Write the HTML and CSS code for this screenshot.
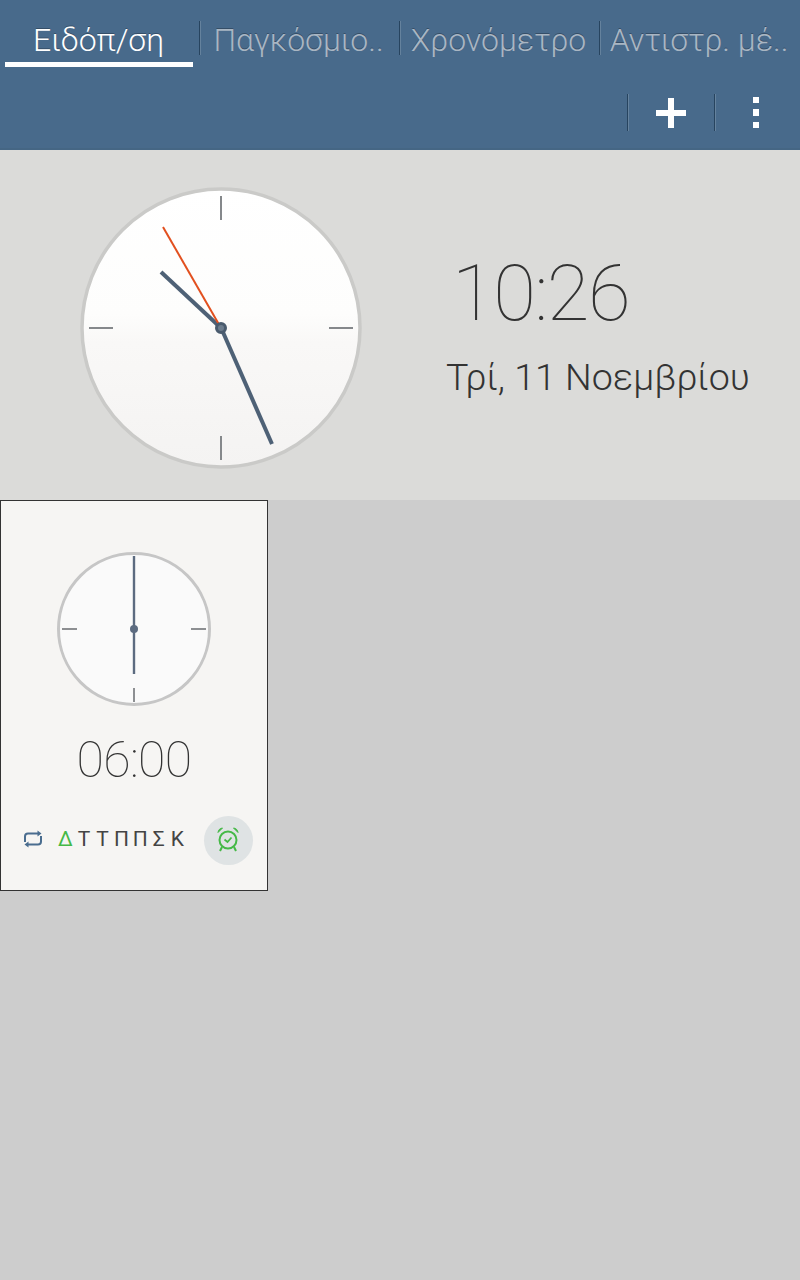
FILE: index.html
```html
<!DOCTYPE html>
<html lang="el">
<head>
<meta charset="utf-8">
<title>Ρολόι</title>
<link rel="stylesheet" href="styles.css">
</head>
<body>
<header class="appbar">
  <nav class="tabs">
    <div class="tab active"><span class="tab-label">Ειδόπ/ση</span></div>
    <div class="tab"><span class="tab-label">Παγκόσμιο..</span></div>
    <div class="tab"><span class="tab-label">Χρονόμετρο</span></div>
    <div class="tab"><span class="tab-label">Αντιστρ. μέ..</span></div>
  </nav>
  <div class="actions">
    <div class="action action-add">
      <svg width="32" height="32" viewBox="0 0 32 32"><path d="M13 1h6v12h12v6H19v12h-6V19H1v-6h12z" fill="#fff"/></svg>
    </div>
    <div class="action action-more">
      <svg width="8" height="32" viewBox="0 0 8 32"><path d="M0 0h6v6H0zM0 12h6v7H0zM0 25h6v6H0z" fill="#fff"/></svg>
    </div>
  </div>
</header>
<section class="now">
  <svg class="big-clock" width="284" height="284" viewBox="0 0 284 284">
    <defs>
      <linearGradient id="face" x1="0" y1="0" x2="0" y2="1">
        <stop offset="0" stop-color="#ffffff"/>
        <stop offset="0.45" stop-color="#fdfdfc"/>
        <stop offset="0.55" stop-color="#f9f8f7"/>
        <stop offset="1" stop-color="#f4f3f2"/>
      </linearGradient>
    </defs>
    <circle cx="142" cy="142" r="139" fill="url(#face)" stroke="#cacac8" stroke-width="3.500"/>
    <path d="M142 10v24M142 250v24M10 142h24M250 142h24" stroke="#85888b" stroke-width="2" fill="none"/>
    <path d="M142 142L82 86" stroke="#4e6176" stroke-width="4"/>
    <path d="M142 142L84 41" stroke="#e2501f" stroke-width="2"/>
    <path d="M143 144L193 258" stroke="#4e6176" stroke-width="4"/>
    <circle cx="142" cy="142" r="4.500" fill="#6d7d8e" stroke="#4a5b6e" stroke-width="3"/>
  </svg>
  <div class="now-text">
    <div class="now-time">10:26</div>
    <div class="now-date">Τρί, 11 Νοεμβρίου</div>
  </div>
</section>
<main class="alarms">
  <article class="alarm-card">
    <svg class="small-clock" width="156" height="156" viewBox="0 0 156 156">
      <circle cx="78" cy="78" r="75.500" fill="#fafafa" stroke="#c6c6c6" stroke-width="3"/>
      <path d="M78 137v14M6 78h15M135 78h15" stroke="#8d8f92" stroke-width="2" fill="none"/>
      <path d="M78 5v118" stroke="#5c6b80" stroke-width="2.400"/>
      <circle cx="78" cy="78" r="4" fill="#5c6b80"/>
    </svg>
    <div class="alarm-time">06:00</div>
    <div class="alarm-row">
      <svg class="repeat" width="20" height="18" viewBox="0 0 20 18">
        <path d="M2 12V6.500A3 3 0 0 1 5 3.500h10M18 6v5.500a3 3 0 0 1-3 3H5" fill="none" stroke="#4a6d8f" stroke-width="2"/>
        <path d="M14.500 0.500l4 3-4 3zM5.500 11.500l-4 3 4 3z" fill="#4a6d8f"/>
      </svg>
      <div class="days">
        <span class="day on">Δ</span><span class="day">Τ</span><span class="day">Τ</span><span class="day">Π</span><span class="day">Π</span><span class="day">Σ</span><span class="day">Κ</span>
      </div>
      <div class="alarm-toggle">
        <svg class="alarm-icon" width="24" height="26" viewBox="0 0 24 26">
          <circle cx="12" cy="14" r="8.500" fill="none" stroke="#45b947" stroke-width="2"/>
          <path d="M8.500 13.500l3 2.500 4-4.500" fill="none" stroke="#45b947" stroke-width="1.800"/>
          <path d="M2 6.500C2.300 3.800 4 2.300 6.500 2zM22 6.500C21.700 3.800 20 2.300 17.500 2z" fill="#45b947" stroke="#45b947" stroke-width="1"/>
          <path d="M6 21L4 25M18 21l2 4" fill="none" stroke="#45b947" stroke-width="2"/>
        </svg>
      </div>
    </div>
  </article>
</main>
</body>
</html>
```
FILE: styles.css
```css
* { box-sizing: border-box; }
html, body { margin: 0; padding: 0; }
body {
  width: 800px;
  height: 1280px;
  overflow: hidden;
  background: #cdcdcd;
  font-family: Roboto, "Noto Sans", sans-serif;
  display: flex;
  flex-direction: column;
}
.appbar {
  height: 150px;
  background: #486a8b;
  border-bottom: 2px solid #456684;
  display: flex;
  flex-direction: column;
  flex: none;
}
.tabs {
  display: flex;
  height: 75px;
  padding-top: 21px;
}
.tab {
  width: 200px;
  height: 34px;
  border-right: 1px solid #27445f;
  box-shadow: 1px 0 0 rgba(255, 255, 255, 0.16);
  display: flex;
  justify-content: center;
  position: relative;
  padding-right: 2px;
}
.tab:last-child { border-right: 0; box-shadow: none; }
.tab-label {
  font-size: 32px;
  font-weight: 300;
  line-height: 39px;
  color: #a9b6c3;
  white-space: nowrap;
  text-shadow: 0 -1px 0 rgba(40, 60, 80, 0.6);
}
.tab.active .tab-label { color: #fff; }
.tab.active::after {
  content: "";
  position: absolute;
  left: 5px;
  top: 41px;
  width: 188px;
  height: 5px;
  background: #fff;
}
.actions {
  display: flex;
  justify-content: flex-end;
  padding-top: 19px;
  padding-right: 1px;
}
.action {
  height: 37px;
  display: flex;
  align-items: center;
  justify-content: center;
  border-left: 1px solid #27445f;
  box-shadow: inset 1px 0 0 rgba(255, 255, 255, 0.16);
}
.action-add { width: 87px; }
.action-more { width: 85px; }
.now {
  height: 350px;
  flex: none;
  background: #dbdbd9;
  display: flex;
  align-items: flex-start;
  padding: 36px 0 0 79px;
}
.big-clock { flex: none; }
.now-text {
  margin-left: 83px;
  display: flex;
  flex-direction: column;
  padding-top: 62px;
}
.now-time {
  font-size: 78px;
  font-weight: 150;
  line-height: 92px;
  letter-spacing: -1.500px;
  color: #333;
  padding-left: 6px;
}
.now-date {
  font-size: 37.600px;
  font-weight: 300;
  line-height: 44px;
  color: #333;
  margin-top: 15px;
}
.alarms { flex: 1; }
.alarm-card {
  width: 268px;
  height: 391px;
  background: #f6f5f3;
  border: 1px solid #333;
  display: flex;
  flex-direction: column;
  align-items: center;
  padding-top: 50px;
}
.small-clock { flex: none; }
.alarm-time {
  margin-top: 24px;
  font-size: 50px;
  font-weight: 150;
  line-height: 58px;
  letter-spacing: -0.700px;
  color: #333;
}
.alarm-row {
  align-self: stretch;
  display: flex;
  align-items: center;
  margin-top: 27px;
  padding-left: 22px;
}
.repeat { flex: none; margin-top: -3px; }
.days {
  display: flex;
  margin-left: 15px;
  gap: 4.200px;
  width: 130px;
  margin-top: -3px;
}
.day {
  font-size: 21px;
  font-weight: 400;
  color: #444;
  line-height: 24px;
  width: 14.500px;
  text-align: center;
}
.day.on { color: #45b947; }
.alarm-toggle {
  width: 49px;
  height: 49px;
  margin-left: 16px;
  border-radius: 50%;
  background: #dfe3e4;
  display: flex;
  align-items: center;
  justify-content: center;
}
.alarm-icon { margin-top: -3px; margin-left: -2px; }
```
